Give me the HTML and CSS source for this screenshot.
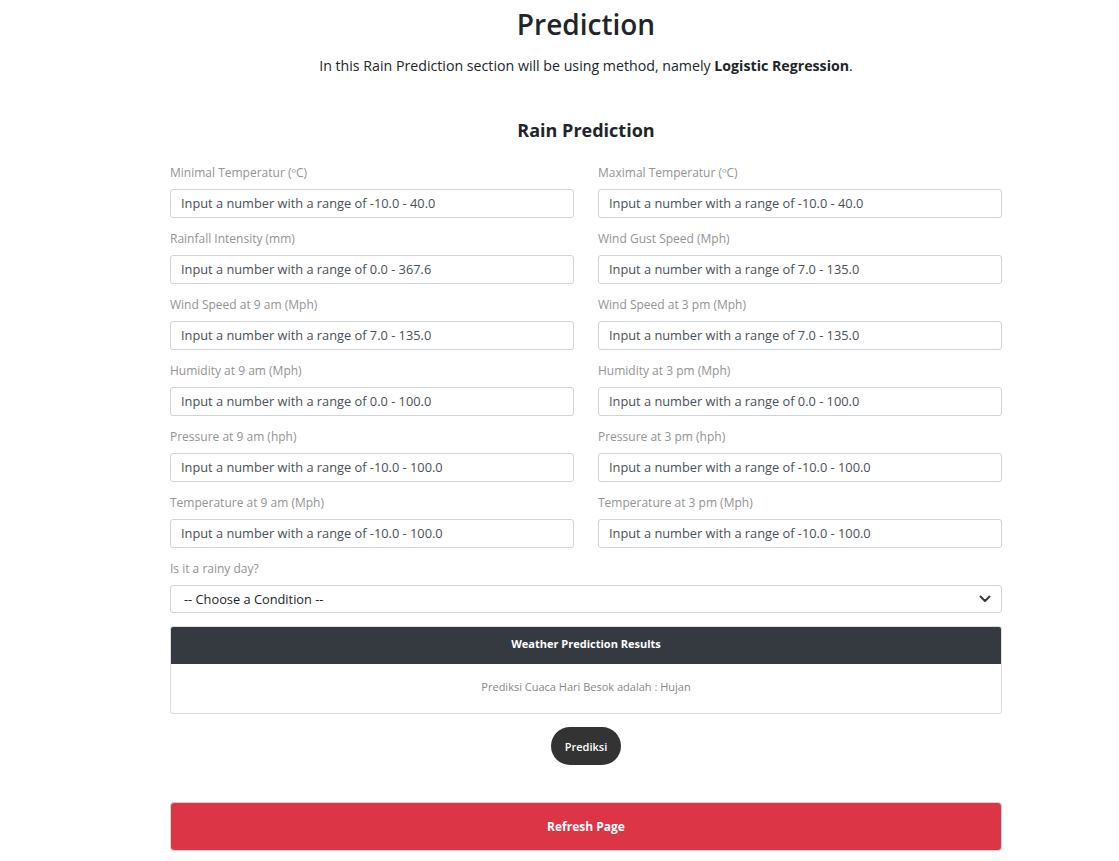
FILE: index.html
```html
<!DOCTYPE html>
<html lang="en">
<head>
<meta charset="utf-8">
<title>Prediction</title>
<link rel="stylesheet" href="styles.css">
</head>
<body>
<main class="page">
  <h1 class="title">Prediction</h1>
  <p class="lead">In this Rain Prediction section will be using method, namely <strong>Logistic Regression</strong>.</p>

  <h2 class="form-title">Rain Prediction</h2>

  <form class="form">
    <div class="grid">
      <div class="field"><label>Minimal Temperatur (ºC)</label><input type="text" placeholder="Input a number with a range of -10.0 - 40.0"></div>
      <div class="field"><label>Maximal Temperatur (ºC)</label><input type="text" placeholder="Input a number with a range of -10.0 - 40.0"></div>
      <div class="field"><label>Rainfall Intensity (mm)</label><input type="text" placeholder="Input a number with a range of 0.0 - 367.6"></div>
      <div class="field"><label>Wind Gust Speed (Mph)</label><input type="text" placeholder="Input a number with a range of 7.0 - 135.0"></div>
      <div class="field"><label>Wind Speed at 9 am (Mph)</label><input type="text" placeholder="Input a number with a range of 7.0 - 135.0"></div>
      <div class="field"><label>Wind Speed at 3 pm (Mph)</label><input type="text" placeholder="Input a number with a range of 7.0 - 135.0"></div>
      <div class="field"><label>Humidity at 9 am (Mph)</label><input type="text" placeholder="Input a number with a range of 0.0 - 100.0"></div>
      <div class="field"><label>Humidity at 3 pm (Mph)</label><input type="text" placeholder="Input a number with a range of 0.0 - 100.0"></div>
      <div class="field"><label>Pressure at 9 am (hph)</label><input type="text" placeholder="Input a number with a range of -10.0 - 100.0"></div>
      <div class="field"><label>Pressure at 3 pm (hph)</label><input type="text" placeholder="Input a number with a range of -10.0 - 100.0"></div>
      <div class="field"><label>Temperature at 9 am (Mph)</label><input type="text" placeholder="Input a number with a range of -10.0 - 100.0"></div>
      <div class="field"><label>Temperature at 3 pm (Mph)</label><input type="text" placeholder="Input a number with a range of -10.0 - 100.0"></div>
      <div class="field full"><label>Is it a rainy day?</label>
        <div class="select">
          <span>-- Choose a Condition --</span>
          <svg class="chev" width="12" height="8" viewBox="0 0 12 8"><path d="M1.5 1.5 6 6l4.5-4.5" fill="none" stroke="#343a40" stroke-width="2" stroke-linecap="round" stroke-linejoin="round"/></svg>
        </div>
      </div>
    </div>

    <div class="card">
      <div class="card-head">Weather Prediction Results</div>
      <div class="card-body">Prediksi Cuaca Hari Besok adalah : Hujan</div>
    </div>

    <div class="actions"><button type="button" class="btn-pill">Prediksi</button></div>

    <button type="button" class="btn-refresh">Refresh Page</button>
  </form>
</main>
</body>
</html>
```
FILE: styles.css
```css
* { box-sizing: border-box; }
html, body { margin: 0; padding: 0; background: #fff; }
body {
  font-family: "Open Sans", "Noto Sans", sans-serif;
  color: #212529;
}
.page {
  width: 832px;
  margin-left: 170px;
  padding-top: 4px;
}
.title {
  margin: 0;
  text-align: center;
  font-size: 28px;
  font-weight: 600;
  line-height: 40px;
  color: #212529;
}
.lead {
  margin: 12px 0 0;
  text-align: center;
  font-size: 14.2px;
  line-height: 20px;
  color: #212529;
}
.lead strong { font-weight: 700; }
.form-title {
  margin: 42px 0 0;
  text-align: center;
  font-size: 18px;
  font-weight: 700;
  line-height: 24px;
  color: #212529;
}
.form { margin-top: 23px; }
.grid {
  display: grid;
  grid-template-columns: 1fr 1fr;
  column-gap: 24px;
  row-gap: 13px;
}
.field { display: flex; flex-direction: column; }
.field.full { grid-column: 1 / -1; }
.field label {
  font-size: 12px;
  line-height: 15px;
  color: #939393;
  margin-bottom: 9px;
}
.field input {
  height: 29px;
  border: 1px solid #ced4da;
  border-radius: 3px;
  padding: 0 10px 1px;
  font-family: inherit;
  font-size: 12.8px;
  color: #495057;
}
.field input::placeholder { color: #495057; opacity: 1; }
.select {
  height: 28px;
  border: 1px solid #ced4da;
  border-radius: 3px;
  padding: 0 10px 1px 13px;
  display: flex;
  align-items: center;
  justify-content: space-between;
  font-size: 12.8px;
  color: #212529;
}
.chev { display: block; }
.card {
  margin-top: 13px;
  border: 1px solid #dcdcdc;
  border-radius: 3px;
  overflow: hidden;
}
.card-head {
  background: #343a40;
  color: #fff;
  height: 37px;
  padding-bottom: 4px;
  display: flex;
  align-items: center;
  justify-content: center;
  font-size: 11px;
  font-weight: 700;
}
.card-body {
  height: 49px;
  padding-bottom: 4px;
  display: flex;
  align-items: center;
  justify-content: center;
  font-size: 11px;
  color: #888;
}
.actions {
  display: flex;
  justify-content: center;
  margin-top: 13px;
}
.btn-pill {
  width: 70px;
  height: 38px;
  border: none;
  border-radius: 19px;
  background: #333;
  color: #fff;
  font-family: inherit;
  font-size: 11px;
  font-weight: 600;
}
.btn-refresh {
  display: block;
  width: 100%;
  height: 49px;
  margin-top: 37px;
  border: 1px solid #d6d6d6;
  border-radius: 4px;
  background: #dc3545;
  color: #fff;
  font-family: inherit;
  font-size: 12px;
  font-weight: 700;
}
```
